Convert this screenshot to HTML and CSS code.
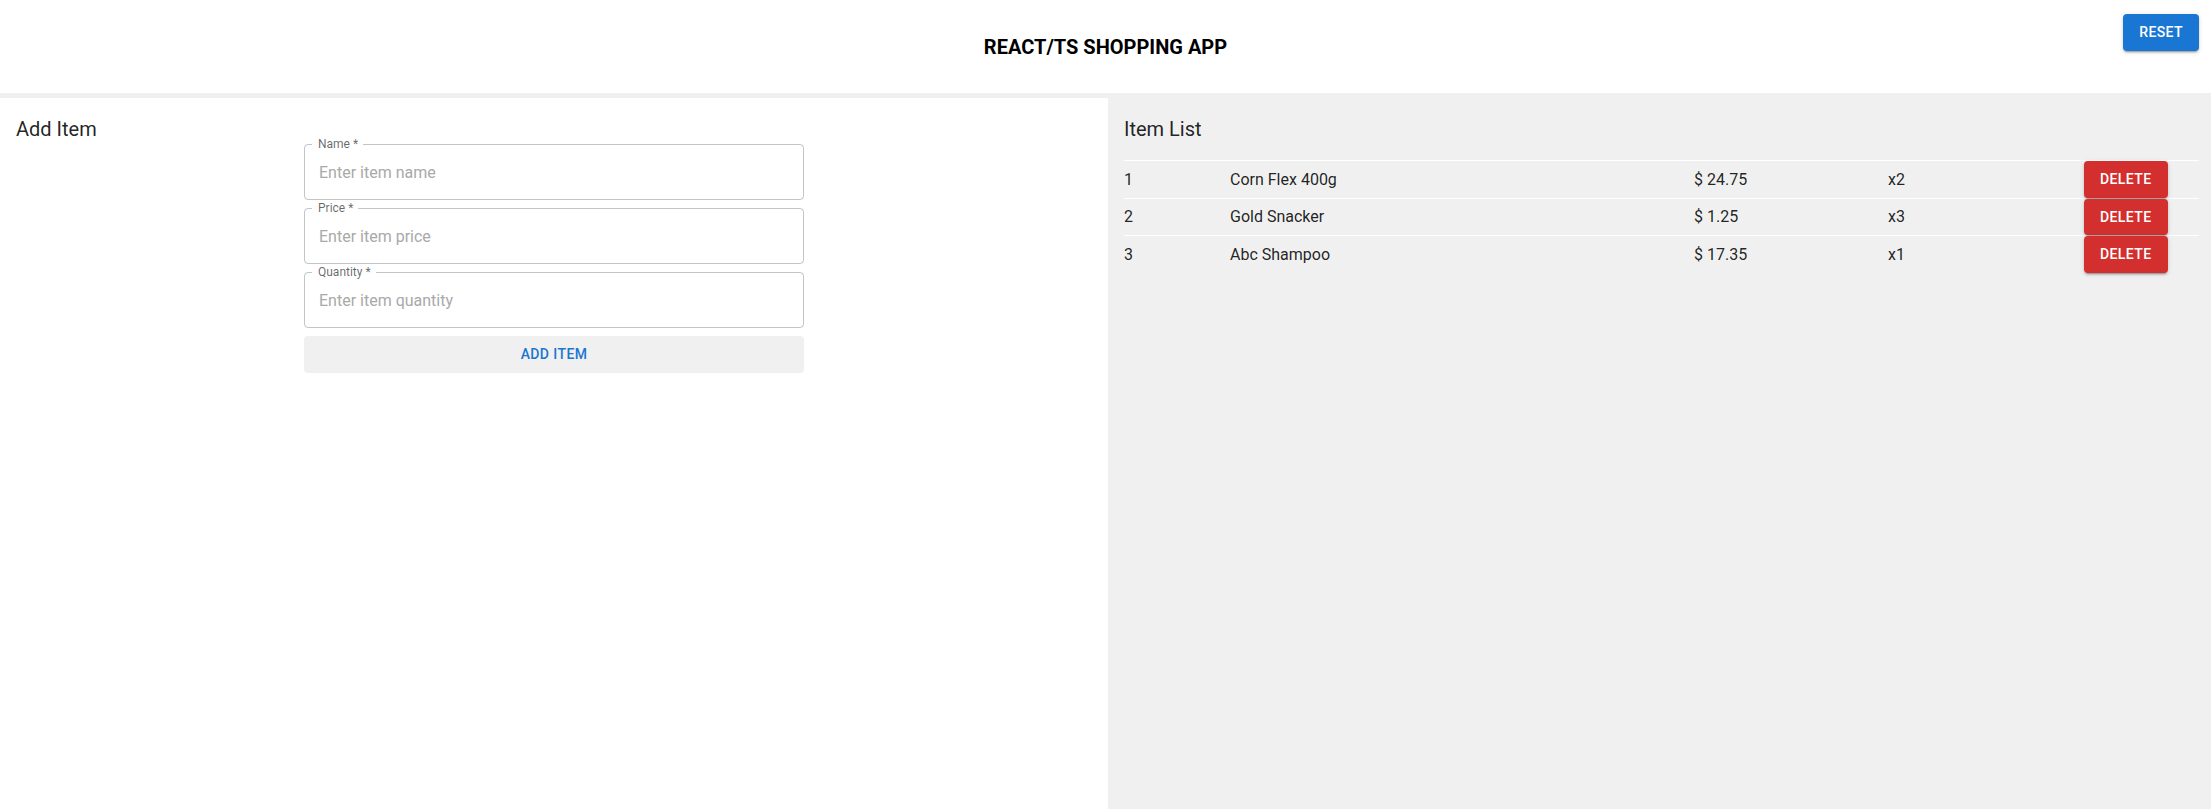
FILE: index.html
```html
<!DOCTYPE html>
<html lang="en">
<head>
<meta charset="utf-8">
<title>React/TS Shopping App</title>
<link rel="stylesheet" href="styles.css">
</head>
<body>
<header class="app-header">
  <div class="header-spacer"></div>
  <h1 class="app-title">REACT/TS SHOPPING APP</h1>
  <div class="header-actions">
    <button class="btn btn-contained btn-primary" type="button">Reset</button>
  </div>
</header>
<main class="app-main">
  <section class="panel panel-add">
    <h2 class="panel-title">Add Item</h2>
    <form class="item-form">
      <div class="field">
        <label class="field-label">Name *</label>
        <input class="field-input" type="text" placeholder="Enter item name">
      </div>
      <div class="field">
        <label class="field-label">Price *</label>
        <input class="field-input" type="text" placeholder="Enter item price">
      </div>
      <div class="field">
        <label class="field-label">Quantity *</label>
        <input class="field-input" type="text" placeholder="Enter item quantity">
      </div>
      <button class="btn btn-text-grey" type="button">Add Item</button>
    </form>
  </section>
  <section class="panel panel-list">
    <h2 class="panel-title">Item List</h2>
    <div class="item-list">
      <div class="item-row">
        <span class="cell">1</span>
        <span class="cell">Corn Flex 400g</span>
        <span class="cell">$ 24.75</span>
        <span class="cell">x2</span>
        <span class="cell"><button class="btn btn-contained btn-error" type="button">Delete</button></span>
      </div>
      <div class="item-row">
        <span class="cell">2</span>
        <span class="cell">Gold Snacker</span>
        <span class="cell">$ 1.25</span>
        <span class="cell">x3</span>
        <span class="cell"><button class="btn btn-contained btn-error" type="button">Delete</button></span>
      </div>
      <div class="item-row">
        <span class="cell">3</span>
        <span class="cell">Abc Shampoo</span>
        <span class="cell">$ 17.35</span>
        <span class="cell">x1</span>
        <span class="cell"><button class="btn btn-contained btn-error" type="button">Delete</button></span>
      </div>
    </div>
  </section>
</main>
</body>
</html>
```

FILE: styles.css
```css
* {
  box-sizing: border-box;
}

html, body {
  margin: 0;
  padding: 0;
}

body {
  font-family: Roboto, "Liberation Sans", Arial, sans-serif;
  background: #f0f0f0;
  color: rgba(0, 0, 0, 0.87);
  min-height: 100vh;
  display: flex;
  flex-direction: column;
}

.app-header {
  background: #ffffff;
  height: 93px;
  display: grid;
  grid-template-columns: 1fr auto 1fr;
  align-items: center;
}

.app-title {
  margin: 0;
  font-size: 20px;
  font-weight: 700;
  line-height: 1;
  color: #000;
  letter-spacing: 0;
}

.header-actions {
  align-self: start;
  justify-self: end;
  padding-top: 14px;
  padding-right: 12px;
}

.btn {
  font-family: Roboto, "Liberation Sans", Arial, sans-serif;
  font-size: 14px;
  font-weight: 500;
  line-height: 24.5px;
  letter-spacing: 0.4px;
  text-transform: uppercase;
  border: 0;
  border-radius: 4px;
  padding: 6px 16px;
  cursor: pointer;
}

.btn-contained {
  color: #ffffff;
  box-shadow: 0 3px 1px -2px rgba(0, 0, 0, 0.2), 0 2px 2px 0 rgba(0, 0, 0, 0.14), 0 1px 5px 0 rgba(0, 0, 0, 0.12);
}

.btn-primary {
  background: #1976d2;
}

.btn-error {
  background: #d32f2f;
}

.btn-text-grey {
  background: #f0f0f0;
  color: #1976d2;
  width: 100%;
}

.app-main {
  flex: 1;
  margin-top: 5px;
  display: grid;
  grid-template-columns: 1108px 1fr;
}

.panel {
  padding: 16px 12px 16px 16px;
}

.panel-add {
  background: #ffffff;
  padding-right: 16px;
}

.panel-title {
  margin: 0;
  font-size: 20px;
  font-weight: 400;
  line-height: 30px;
  color: rgba(0, 0, 0, 0.87);
}

.item-form {
  width: 500px;
  margin: 0 auto;
  display: flex;
  flex-direction: column;
  gap: 8px;
}

.field {
  position: relative;
}

.field-label {
  position: absolute;
  top: -6px;
  left: 8px;
  padding: 0 5px 0 6px;
  background: #ffffff;
  font-size: 12px;
  line-height: 12px;
  color: rgba(0, 0, 0, 0.6);
}

.field-input {
  display: block;
  width: 100%;
  height: 56px;
  padding: 16.5px 14px;
  border: 1px solid rgba(0, 0, 0, 0.23);
  border-radius: 4px;
  font-family: Roboto, "Liberation Sans", Arial, sans-serif;
  font-size: 16px;
  color: rgba(0, 0, 0, 0.87);
  background: transparent;
  outline: none;
}

.field-input::placeholder {
  color: #a9a9a9;
  opacity: 1;
}

.item-list {
  margin-top: 16px;
}

.item-row {
  display: grid;
  grid-template-columns: 106px 464px 194px 196px auto;
  align-items: center;
  border-top: 1px solid #ffffff;
  font-size: 16px;
  color: rgba(0, 0, 0, 0.87);
  min-height: 37px;
}

.cell {
  display: block;
}
```
